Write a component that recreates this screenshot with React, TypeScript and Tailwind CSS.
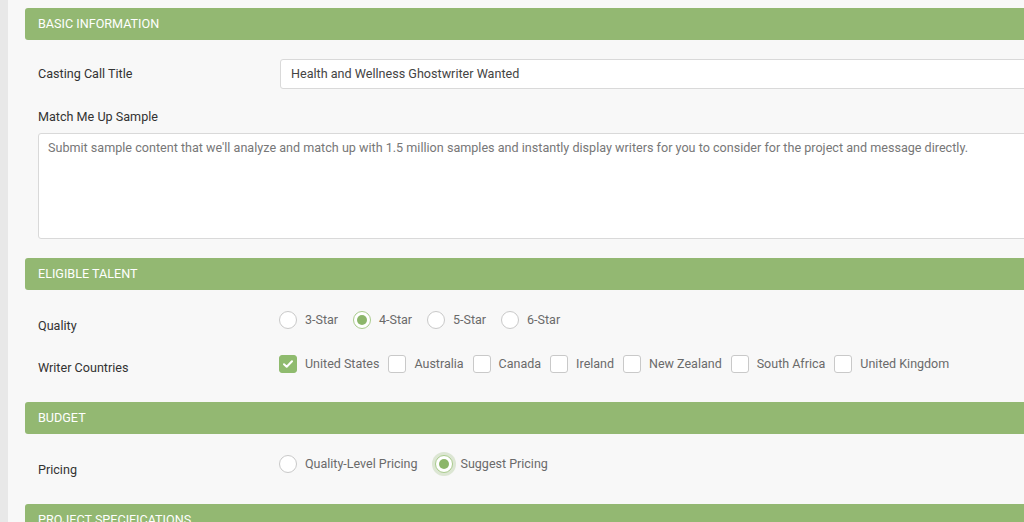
import React from 'react'

const font = { fontFamily: 'Roboto, "Liberation Sans", sans-serif' }

const Header = ({ title }: { title: string }) => (
  <div className="flex h-[32px] items-center rounded-l-[3px] bg-[#93b872] pl-[13px] text-[12.6px] uppercase text-white">
    {title}
  </div>
)

const Radio = ({ checked, glow, label }: { checked?: boolean; glow?: boolean; label: string }) => (
  <div className="flex h-[18px] items-center">
    <span
      className={`flex size-[18px] items-center justify-center rounded-full border bg-white ${
        checked ? 'border-[#a9cb8c]' : 'border-[#c9c9c9]'
      } ${glow ? 'shadow-[0_0_0_3px_rgba(147,184,114,0.28)]' : ''}`}
    >
      {checked && <span className="size-[10px] rounded-full bg-[#8cb66a]" />}
    </span>
    <span className="ml-[8px] text-[12.5px] leading-[16px] text-[#6a6a6a]">{label}</span>
  </div>
)

const Check = ({ checked, label }: { checked?: boolean; label: string }) => (
  <div className="flex h-[18px] items-center">
    <span
      className={`flex size-[18px] items-center justify-center rounded-[3px] border ${
        checked ? 'border-[#8fbb6e] bg-[#8fbb6e]' : 'border-[#c9c9c9] bg-white'
      }`}
    >
      {checked && (
        <svg width="10" height="8" viewBox="0 0 10 8" fill="none">
          <path d="M1 4.2 3.7 6.8 9 1.2" stroke="white" strokeWidth="2" strokeLinecap="round" strokeLinejoin="round" />
        </svg>
      )}
    </span>
    <span className="ml-[8px] text-[12.5px] leading-[16px] text-[#6a6a6a]">{label}</span>
  </div>
)

export default function App() {
  const countries = ['Australia', 'Canada', 'Ireland', 'New Zealand', 'South Africa', 'United Kingdom']
  return (
    <div className="flex h-[522px] w-[1024px] overflow-hidden bg-[#f8f8f8]" style={font}>
      <div className="w-[8px] shrink-0 bg-[#e8e8e8]" />
      <div className="w-[1040px] shrink-0 pl-[17px] pt-[8px]">
        {/* basic information */}
        <Header title="Basic Information" />
        <div className="pb-[19px] pl-[13px] pt-[19px]">
          <div className="flex items-center">
            <div className="w-[242px] text-[12.6px] text-[#333]">Casting Call Title</div>
            <div className="flex h-[30px] flex-1 items-center rounded-[3px] border border-[#d9d9d9] bg-white pl-[10px] text-[12.6px] text-[#444]">
              Health and Wellness Ghostwriter Wanted
            </div>
          </div>
          <div className="mt-[20px] h-[16px] text-[12.6px] leading-[16px] text-[#333]">Match Me Up Sample</div>
          <div className="mt-[8px] h-[106px] rounded-[3px] border border-[#d9d9d9] bg-white px-[9px] pt-[6px] text-[12.6px] leading-[16px] text-[#777]">
            Submit sample content that we'll analyze and match up with 1.5 million samples and instantly display writers for you to consider for the project and message directly.
          </div>
        </div>

        {/* eligible talent */}
        <Header title="Eligible Talent" />
        <div className="pb-[29px] pl-[13px] pt-[21px]">
          <div className="flex h-[18px] items-start">
            <div className="mt-[7px] w-[241px] text-[12.6px] leading-[16px] text-[#333]">Quality</div>
            <div className="flex gap-[15px]">
              <Radio label="3-Star" />
              <Radio checked label="4-Star" />
              <Radio label="5-Star" />
              <Radio label="6-Star" />
            </div>
          </div>
          <div className="mt-[26px] flex h-[18px] items-start">
            <div className="mt-[5px] w-[241px] text-[12.6px] leading-[16px] text-[#333]">Writer Countries</div>
            <div className="flex gap-[9px]">
              <Check checked label="United States" />
              {countries.map((c) => (
                <Check key={c} label={c} />
              ))}
            </div>
          </div>
        </div>

        {/* budget */}
        <Header title="Budget" />
        <div className="pb-[31px] pl-[13px] pt-[21px]">
          <div className="flex h-[18px] items-start">
            <div className="mt-[7px] w-[241px] text-[12.6px] leading-[16px] text-[#333]">Pricing</div>
            <div className="flex gap-[17px]">
              <Radio label="Quality-Level Pricing" />
              <Radio checked glow label="Suggest Pricing" />
            </div>
          </div>
        </div>

        <Header title="Project Specifications" />
      </div>
    </div>
  )
}
